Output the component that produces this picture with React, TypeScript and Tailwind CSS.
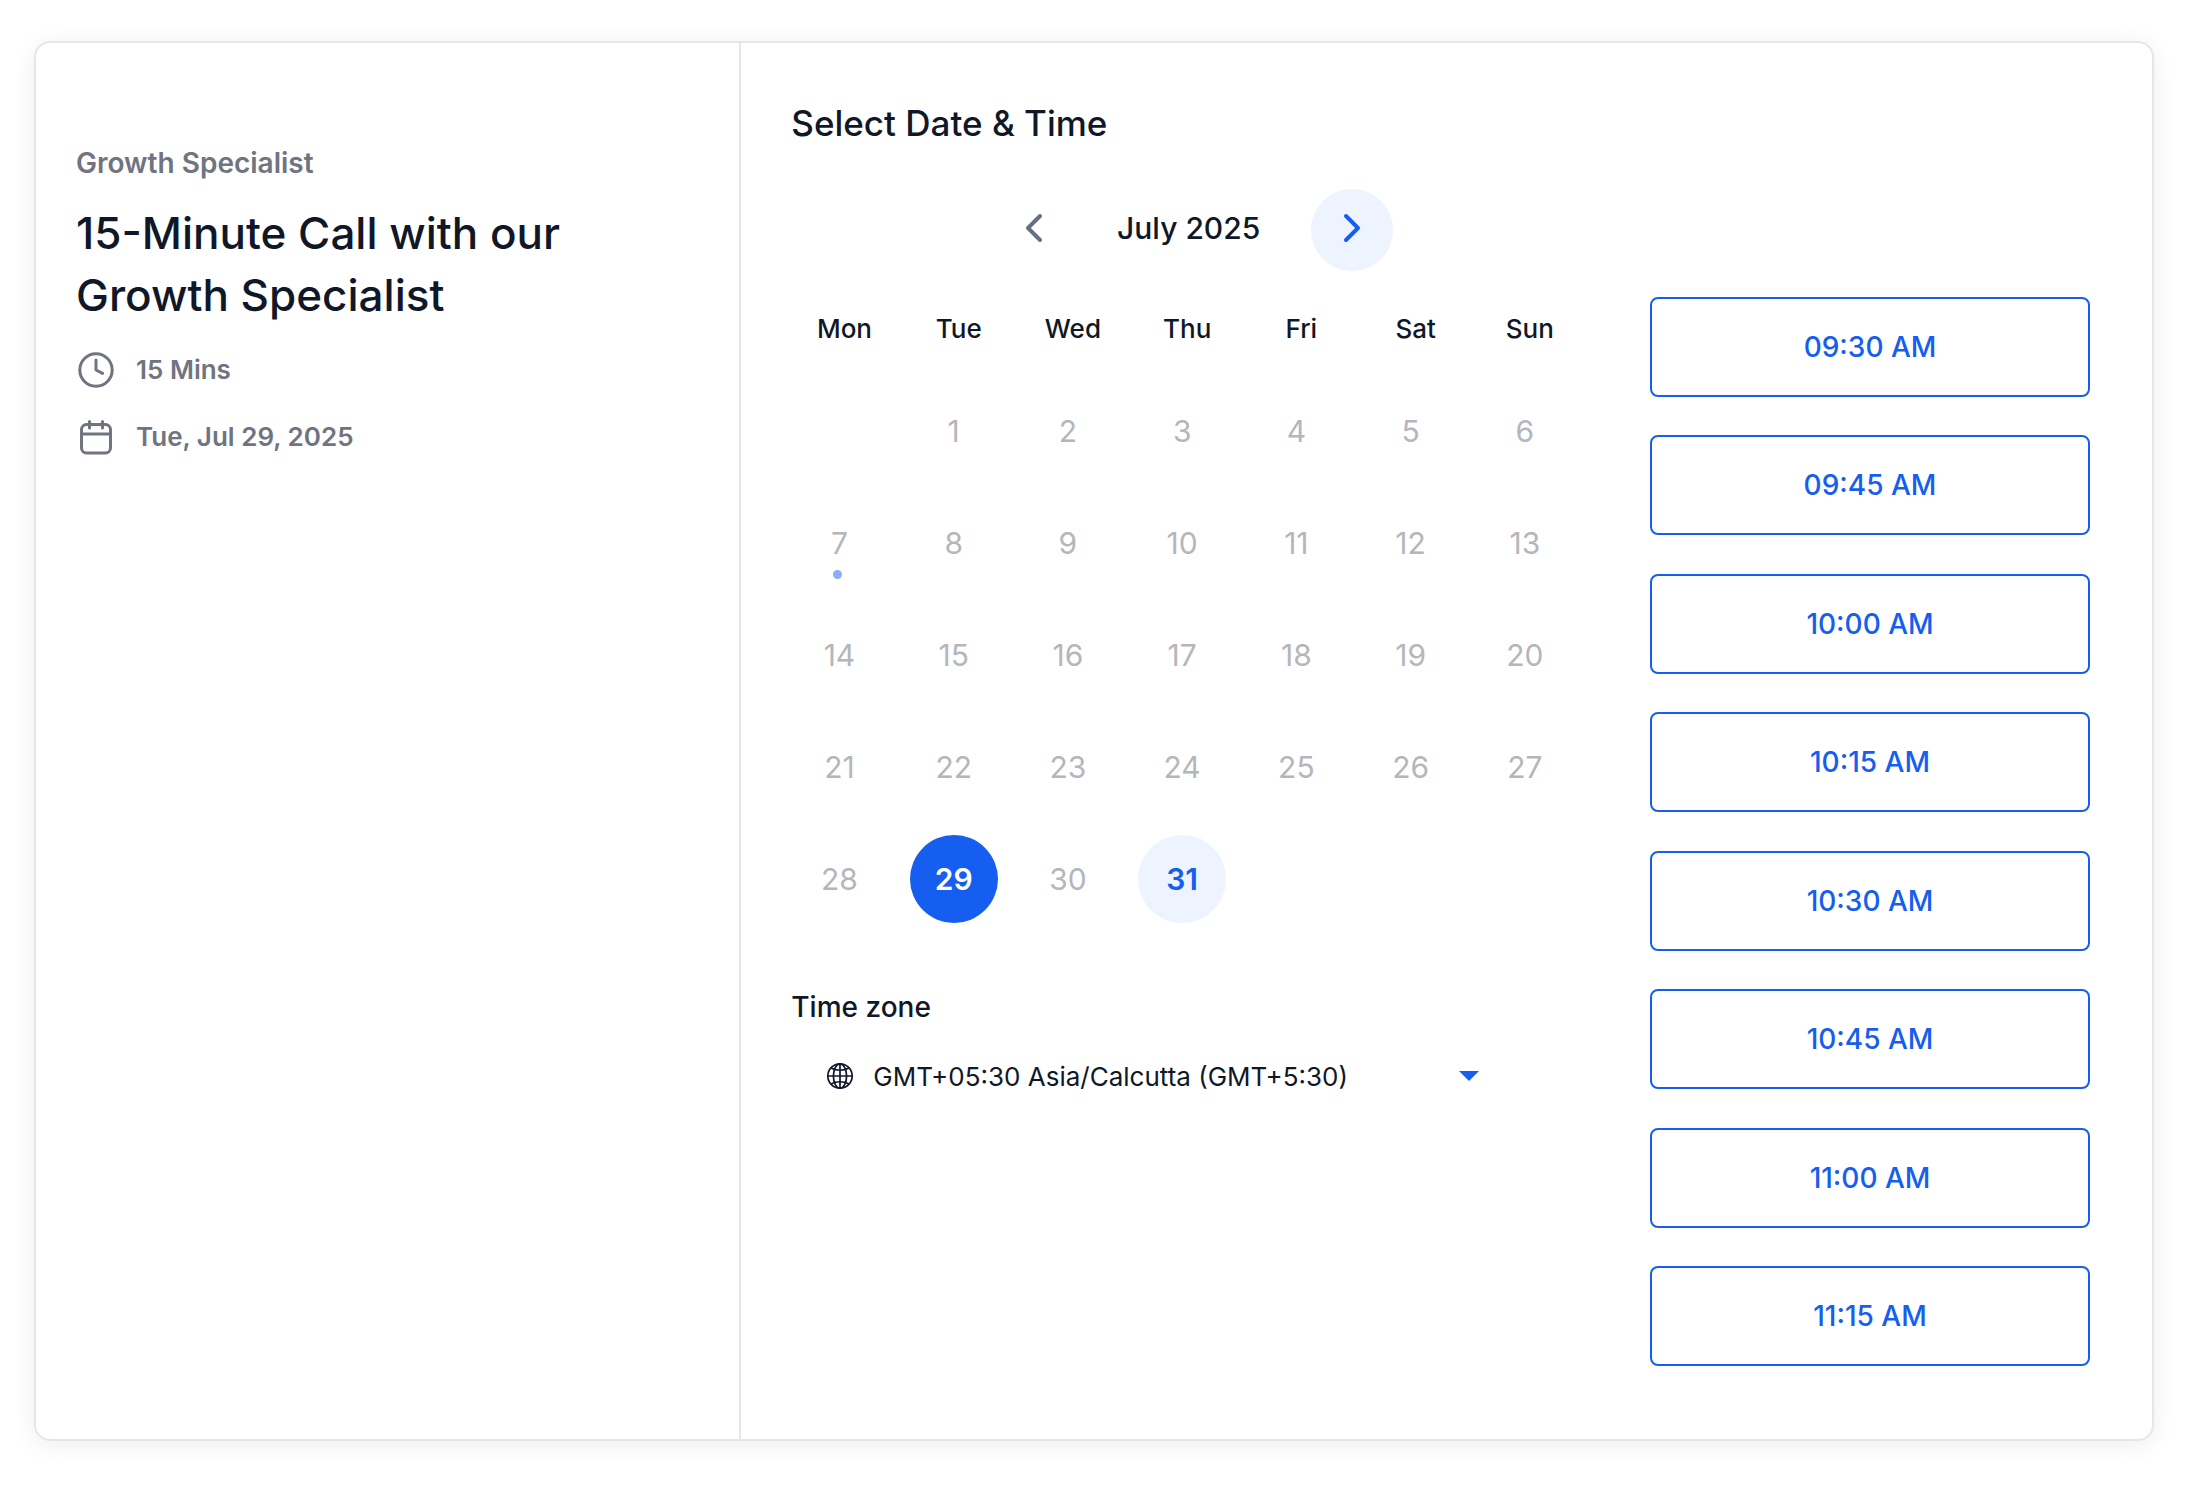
import React, { useState } from 'react';
import { ChevronLeft, ChevronRight } from 'lucide-react';
import clsx from 'clsx';

const weekdays = ['Mon', 'Tue', 'Wed', 'Thu', 'Fri', 'Sat', 'Sun'];

const weeks: (number | null)[][] = [
  [null, 1, 2, 3, 4, 5, 6],
  [7, 8, 9, 10, 11, 12, 13],
  [14, 15, 16, 17, 18, 19, 20],
  [21, 22, 23, 24, 25, 26, 27],
  [28, 29, 30, 31, null, null, null],
];

const slots = ['09:30 AM', '09:45 AM', '10:00 AM', '10:15 AM', '10:30 AM', '10:45 AM', '11:00 AM', '11:15 AM'];

const today = 7;
const availableDays = [29, 31];

function ClockIcon() {
  return (
    <svg className="w-10 h-10 shrink-0" viewBox="0 0 40 40" fill="none" stroke="currentColor" strokeWidth="3" strokeLinecap="round" strokeLinejoin="round">
      <circle cx="20" cy="20" r="16.2" />
      <path d="M20 10v10l6.6 3.4" />
    </svg>
  );
}

function CalendarIcon() {
  return (
    <svg className="w-10 h-10 shrink-0" viewBox="0 0 40 40" fill="none" stroke="currentColor" strokeWidth="3" strokeLinecap="round">
      <rect x="5.5" y="7.5" width="29" height="28.5" rx="5" />
      <path d="M5.500 17h29M13.500 4.500v6.400M26.500 4.500v6.400" />
    </svg>
  );
}

function GlobeIcon() {
  return (
    <svg className="w-7 h-7" viewBox="0 0 28 28" fill="none" stroke="currentColor" strokeWidth="1.7">
      <circle cx="14" cy="14" r="12.2" />
      <ellipse cx="14" cy="14" rx="6.6" ry="12.2" />
      <path d="M14 2v24M2 14h24" />
      <path d="M5 6c5 3 13 3 18 0M5 22c5-3 13-3 18 0" />
    </svg>
  );
}

function Calendar() {
  const [selected, setSelected] = useState(29);

  return (
    <table className="w-full table-fixed mt-3">
      <thead>
        <tr className="h-[92px]">
          {weekdays.map((day) => (
            <th key={day} scope="col" className="text-[26px] leading-8 font-medium text-center">
              {day}
            </th>
          ))}
        </tr>
      </thead>
      <tbody>
        {weeks.map((week, i) => (
          <tr key={i} className="h-28">
            {week.map((day, j) => (
              <td key={j} className="pr-[10px]">
                {day && (
                  <button
                    disabled={!availableDays.includes(day)}
                    onClick={() => setSelected(day)}
                    className={clsx(
                      'relative mx-auto flex w-[88px] h-[88px] items-center justify-center rounded-full text-[30px]',
                      !availableDays.includes(day) && 'text-[#b5b6bb]',
                      availableDays.includes(day) && 'font-semibold',
                      availableDays.includes(day) && day !== selected && 'bg-[#edf3ff] text-[#155eef]',
                      day === selected && 'bg-[#155eef] text-white',
                    )}
                  >
                    {day}
                    {day === today && (
                      <span className="absolute bottom-2 left-1/2 -ml-[6px] w-[9px] h-[9px] rounded-full bg-[#8aaef7]" />
                    )}
                  </button>
                )}
              </td>
            ))}
          </tr>
        ))}
      </tbody>
    </table>
  );
}

function TimeZoneSelect() {
  return (
    <div className="mt-[52px] pl-1">
      <label htmlFor="timezone" className="block text-[28px] leading-10 font-medium">
        Time zone
      </label>
      <div className="relative mt-[21px] flex h-14 max-w-[720px] items-center">
        <span className="pointer-events-none absolute left-[35px]">
          <GlobeIcon />
        </span>
        <select id="timezone" className="h-full w-full appearance-none bg-transparent pl-[82px] pr-20 text-[26px]">
          <option>GMT+05:30 Asia/Calcutta (GMT+5:30)</option>
        </select>
        <svg className="pointer-events-none absolute right-8 w-5 h-[10px] text-[#155eef]" viewBox="0 0 20 10" fill="currentColor">
          <path d="M0 0h20L10 10z" />
        </svg>
      </div>
    </div>
  );
}

export default function App() {
  return (
    <div className="min-h-screen bg-white pt-[41px] pb-[53px] pl-[34px] pr-[46px] font-['Inter',sans-serif] text-[#101828]">
      <main className="grid min-h-[1400px] grid-cols-[1fr_2fr] rounded-2xl border-2 border-[#e6e6e6] shadow-[0_4px_24px_rgba(0,0,0,0.07)]">
        <section className="border-r-2 border-[#e6e6e6] px-10 pt-[100px]">
          <p className="text-[28px] leading-10 font-semibold text-[#6f7480]">Growth Specialist</p>
          <h1 className="mt-[19px] text-[44px] leading-[62px] font-medium">
            15-Minute Call with our
            <br />
            Growth Specialist
          </h1>
          <div className="mt-6 flex flex-col gap-[27px] text-[26px] leading-10 font-semibold text-[#6f7480]">
            <div className="flex items-center gap-5">
              <ClockIcon />
              15 Mins
            </div>
            <div className="flex items-center gap-5">
              <CalendarIcon />
              Tue, Jul 29, 2025
            </div>
          </div>
        </section>

        <section className="flex gap-[63px] pl-[46px] pr-[62px]">
          <div className="flex-1 pt-[58px]">
            <h2 className="pl-1 text-[35px] leading-[44px] font-medium">Select Date &amp; Time</h2>
            <div className="mt-11 flex items-center justify-center pl-3">
              <button aria-label="Previous month" className="flex w-[82px] h-[82px] items-center justify-center pb-1 text-[#667085]">
                <ChevronLeft className="w-12 h-12" />
              </button>
              <span className="ml-[42px] mr-[51px] pb-1 text-[30px] leading-10 font-medium">July 2025</span>
              <button
                aria-label="Next month"
                className="flex w-[82px] h-[82px] items-center justify-center rounded-full bg-[#edf3ff] pb-1 text-[#155eef]"
              >
                <ChevronRight className="w-12 h-12" />
              </button>
            </div>
            <Calendar />
            <TimeZoneSelect />
          </div>

          <div className="flex w-[440px] flex-col justify-between pt-[254px] pb-[73px]">
            {slots.map((slot) => (
              <button
                key={slot}
                className="h-[100px] rounded-lg border-2 border-[#155eef] text-[28px] font-medium text-[#155eef]"
              >
                {slot}
              </button>
            ))}
          </div>
        </section>
      </main>
    </div>
  );
}
